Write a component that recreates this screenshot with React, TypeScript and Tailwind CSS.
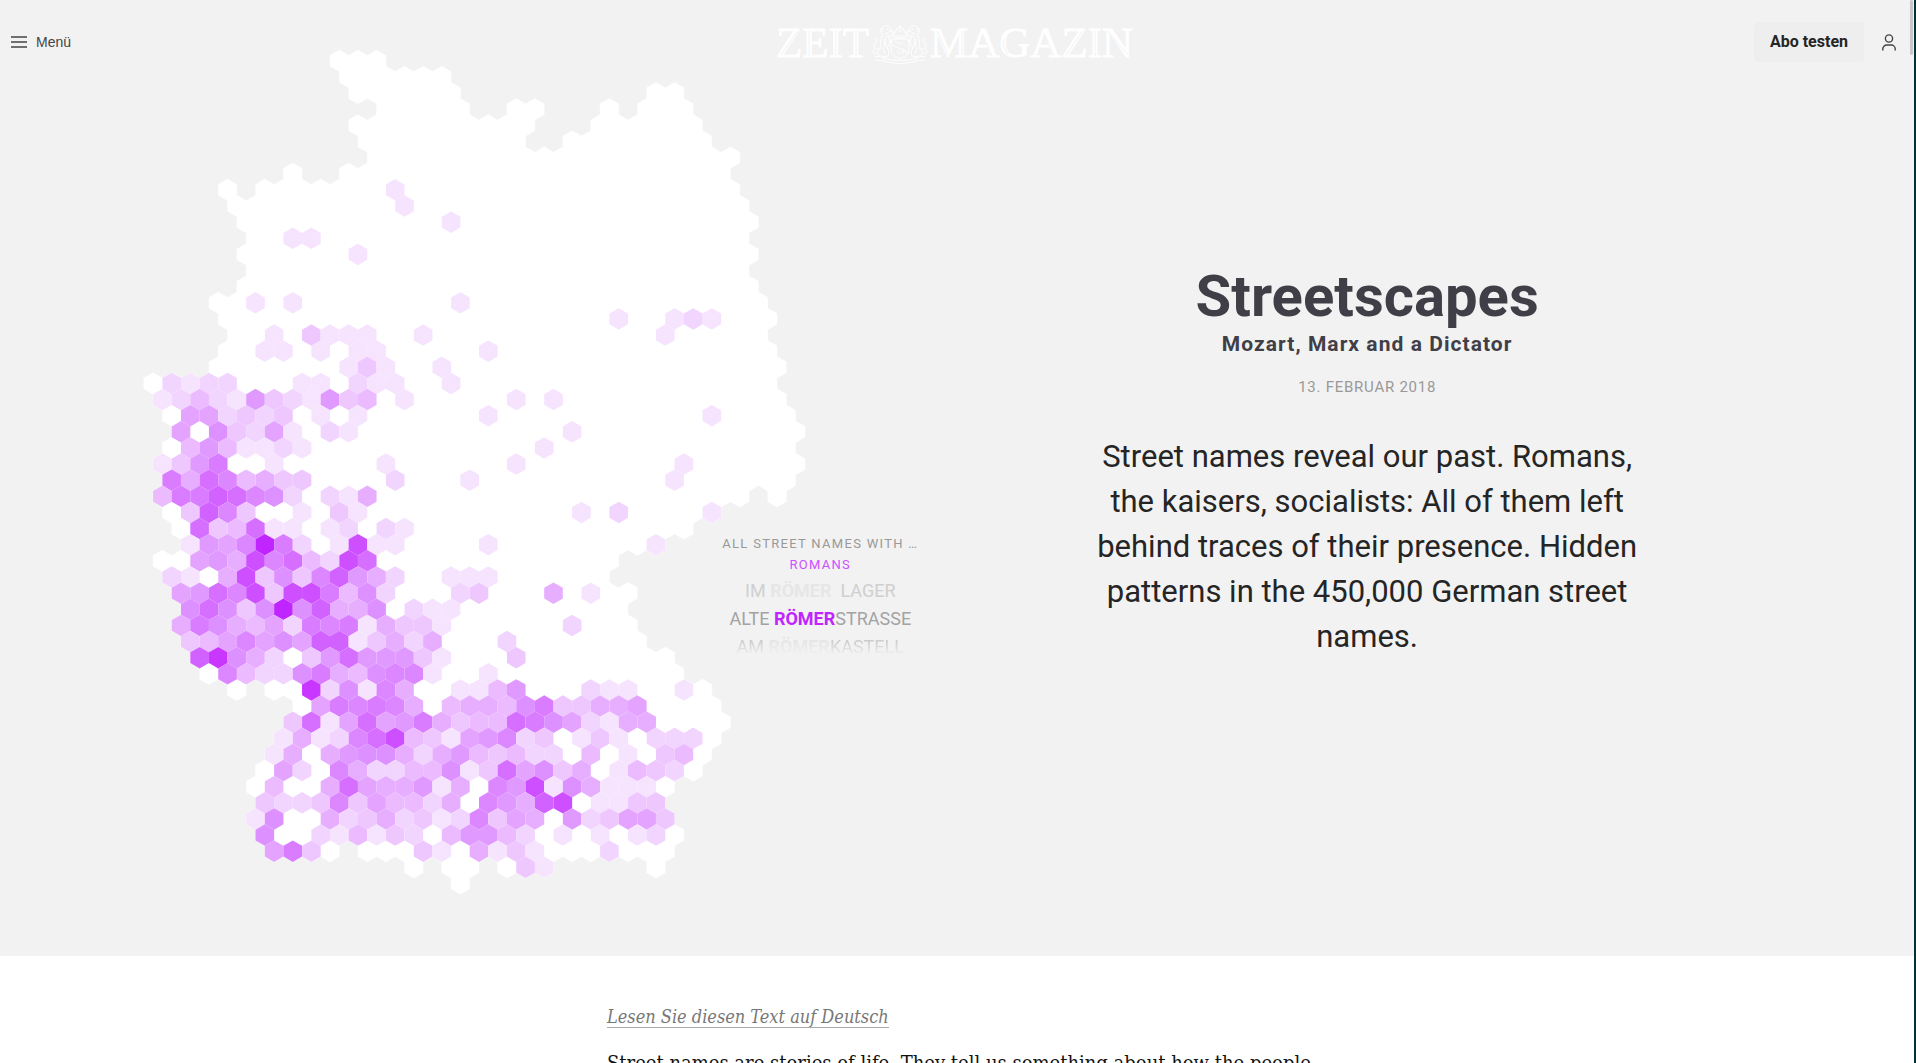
import React from "react";

/* Each row: land columns, then "column:levels" runs with one hex digit per cell. */
const ROWS: [string, string][] = [
  ["10-12", ""],
  ["10-15", ""],
  ["11-16 27-28", ""],
  ["12-16 19-20 24 26-28", ""],
  ["11-20 24-29", ""],
  ["11-19 22-29", ""],
  ["12-31", ""],
  ["7 10-30", ""],
  ["4 6-31", "13:1"],
  ["4-31", "13:1"],
  ["5-32", "16:1"],
  ["5-31", "7:11"],
  ["5-32", "11:1"],
  ["5-31", ""],
  ["5-32", ""],
  ["3-32", "5:1 7:1 16:1"],
  ["4-33", "25:1 28:121"],
  ["4-32", "6:1 8:3111 14:1 27:1"],
  ["4-33", "6:11 9:1 11:11 18:1"],
  ["3-33", "10:131 15:1"],
  ["0-33", "1:2122 8:11 11:211 16:1"],
  ["0-33", "0:124217321734 13:1 19:1 21:1"],
  ["1-34", "2:662323 9:1 11:1 18:1 30:1"],
  ["1-34", "1:6083261 9:21 22:1"],
  ["1-34", "2:4741121 21:1"],
  ["0-34", "0:137a 6:1 12:1 19:1 28:1"],
  ["1-34", "1:a5b94533 13:2 17:1 28:1"],
  ["0-31 33", "0:4aacb982 9:215"],
  ["1-30", "2:3c93 8:1 10:31 23:1 25:2 30:1"],
  ["1-28", "2:b34b11 9:12 12:21"],
  ["2-27", "2:1769fa2 10:1d11 18:1 27:1"],
  ["0-24", "2:675d9b42db"],
  ["1-24", "1:2105d3839c752 16:111"],
  ["1-25", "1:67b9d3dda482 16:23 21:5 23:1"],
  ["2-25", "2:8b838f8c558 14:211"],
  ["1-25", "1:5a85462a9a15331 22:2"],
  ["2-26", "2:3469686cc13525 19:2"],
  ["2-27", "2:ce852037b77731 19:3"],
  ["3-28", "4:94228a548991 18:1"],
  ["4 6-29", "8:e28195 16:1147 23:211 28:1"],
  ["8-30", "9:6a9a95 16:45548a33556"],
  ["7-30", "7:3b16b67a5344ba8621 25:55"],
  ["7-30", "7:15129bd43167923 23:131 27:222"],
  ["6-29", "6:15 9:57885257434 20:22 23:4 25:1 27:34"],
  ["6-29", "7:62 10:95224481 18:3b6835 25:1432"],
  ["5-27", "6:4 9:5b655715 18:97d185111"],
  ["6-27", "6:322393644250975cd 24:1133"],
  ["5-27", "5:18 9:523523129365 22:723663"],
  ["6-28", "6:8 9:214132 16:47742 22:1 24:1 26:12"],
  ["6-9 11-27", "6:6a3 14:31 17:5131 24:2"],
  ["14 16-17 19-21 27", "20:31"],
  ["16", ""],
];

const LEVELS: Record<string, string> = {
  "0": "#ffffff",
  "1": "#f6e4fe",
  "2": "#f1d5ff",
  "3": "#efc7ff",
  "4": "#ebbaff",
  "5": "#e7aeff",
  "6": "#e4a3ff",
  "7": "#e09aff",
  "8": "#dd90ff",
  "9": "#dc86ff",
  a: "#d97cff",
  b: "#d66fff",
  c: "#d262ff",
  d: "#cd4fff",
  e: "#c836ff",
  f: "#c125ff",
};

const W = 18.62;
const R = W / Math.sqrt(3);
const ORIGIN_X = 153;
const ORIGIN_Y = 60.8;

function hexPath(col: number, row: number) {
  const x = ORIGIN_X + W * col + (row % 2 ? W / 2 : 0);
  const y = ORIGIN_Y + R * 1.5 * row;
  const h = W / 2;
  return `M${x} ${y - R}L${x + h} ${y - R / 2}V${y + R / 2}L${x} ${y + R}L${x - h} ${y + R / 2}V${y - R / 2}Z`;
}

const land: string[] = [];
const cells: { d: string; fill: string }[] = [];
ROWS.forEach(([spans, runs], row) => {
  spans.split(" ").forEach((span) => {
    const [a, b] = span.split("-").map(Number);
    for (let c = a; c <= (b ?? a); c++) land.push(hexPath(c, row));
  });
  runs
    .split(" ")
    .filter(Boolean)
    .forEach((run) => {
      const [start, levels] = run.split(":");
      [...levels].forEach((level, i) => {
        if (level !== "0") cells.push({ d: hexPath(Number(start) + i, row), fill: LEVELS[level] });
      });
    });
});

function StreetMap() {
  return (
    <svg viewBox="0 0 820 956" className="block h-auto w-full" role="img" aria-label="Map of Germany">
      <path d={land.join("")} fill="#fff" stroke="#fff" strokeWidth="0.4" />
      {cells.map((cell) => (
        <path key={cell.d} d={cell.d} fill={cell.fill} />
      ))}
    </svg>
  );
}

function Lion() {
  return (
    <g>
      <path d="M109 13c-2-2-1-5 2-6 3-1 5 1 5 3s-1 3-2 4l-3 1M112 10h2M108 9c-2 1-2 4 0 6M114 15c0 3 2 5 2 8 0 2-2 4-3 6 2 2 2 5 1 8l-5 1M109 15c-2 4-3 7-2 11-1 4-4 5-3 9l2 2M115 18l4-2 1-2M115 22l4 0M112 17l-1 6 1 5M110 20l1 8M109 29l2 6" />
      <path d="M107 29c-3 2-7 1-7-2s4-3 3-6c0-2-3-3-3-1M101 30c-2 1-3 4-1 5 1 1 3 0 3-1" />
    </g>
  );
}

function Logo() {
  return (
    <a href="#magazin" aria-label="ZEIT Magazin" className="block">
      <svg viewBox="0 0 360 46" className="block h-[46px] w-[360px]" fill="#fff">
        <g fontFamily="'Liberation Serif', serif" fontSize="43" stroke="#fff" strokeWidth="0.8">
          <text x="2" y="38">ZEIT</text>
          <text x="156" y="38">MAGAZIN</text>
        </g>
        <path
          d="M23.500 12L7 36M35 11v26M61.800 11v26M82 11v26M163 12l11 24M188 12v24M209 16l9 21M230 20q-2 9 4 15M271 16l9 21M308.500 12L292 36M321 11v26M334 12l20 24"
          fill="none"
          stroke="#f2f2f2"
          strokeWidth="1"
        />
        <g fill="none" stroke="#fff" strokeWidth="0.900">
          <Lion />
          <g transform="matrix(-1 0 0 1 252 0)">
            <Lion />
          </g>
          <path d="M117 20h18v12c0 4-5 6-9 8-4-2-9-4-9-8zM117 25l18 10M121 22l5 3 3-2M123 31l3 4 4-2M128 29l4 3" />
          <path d="M119 17l-2-6 4 3 2-5 3 4 3-4 2 5 4-3-2 6zM120 19h12M126 6v4M124 8h4" />
          <path d="M100 38c5-2 10 1 13 2 5 2 21 2 26 0 3-1 8-4 13-2M102 41c5 0 8 1 12 2 7 2 17 2 24 0 4-1 7-2 12-2M107 36l4 5M145 36l-4 5" />
        </g>
      </svg>
    </a>
  );
}

function Header() {
  return (
    <header className="absolute inset-x-0 top-0 z-10 grid h-[84px] grid-cols-[1fr_auto_1fr] items-center pr-[18px] pl-[11px]">
      <button type="button" className="flex items-center gap-[9px] justify-self-start text-sm text-[#444]">
        <svg viewBox="0 0 16 12" className="h-3 w-4" fill="#6f6f6f">
          <path d="M0 0h16v2H0zM0 5h16v2H0zM0 10h16v2H0z" />
        </svg>
        <span>Menü</span>
      </button>
      <Logo />
      <div className="flex items-center gap-[18px] justify-self-end">
        <button type="button" className="h-10 rounded bg-[#eeeeee] px-4 font-[Roboto] text-base font-bold text-[#252525]">
          Abo testen
        </button>
        <button type="button" aria-label="Account">
          <svg viewBox="0 0 14 17" className="h-[17px] w-3.5" fill="none" stroke="#444" strokeWidth="1.400">
            <circle cx="7" cy="4.500" r="3.600" />
            <path d="M.8 16.500V15a4 4 0 0 1 4-4h4.400a4 4 0 0 1 4 4v1.500" />
          </svg>
        </button>
      </div>
    </header>
  );
}

function NameTicker() {
  return (
    <div className="absolute top-[533px] right-0 w-[240px] translate-x-1/2 text-center font-[Roboto] uppercase">
      <p className="text-[13px] leading-[21px] tracking-widest text-[#999]">All street names with …</p>
      <p className="text-[13px] leading-[21px] tracking-widest text-[#cd4fff]">Romans</p>
      <ul className="mt-0.5 text-lg leading-7 text-[#a3a3a3]">
        <li className="text-[#cfcfcf]">
          Im <b className="text-[#e6e6e6]">Römer</b>&nbsp; Lager
        </li>
        <li>
          Alte <b className="text-[#c125ff]">Römer</b>strasse
        </li>
        <li className="mask-linear-[180deg] mask-linear-from-30% mask-linear-to-80% text-[#cdcdcd]">
          Am <b className="text-[#e6e6e6]">Römer</b>kastell
        </li>
      </ul>
    </div>
  );
}

export default function App() {
  return (
    <div className="relative h-screen overflow-hidden border-r-2 border-[#03303b] bg-white font-['Liberation_Sans',sans-serif]">
      <Header />
      <section className="grid grid-cols-[3fr_4fr] bg-[#f2f2f2]">
        <div className="relative">
          <StreetMap />
          <NameTicker />
        </div>
        <div className="flex flex-col items-center pt-[260px] text-center font-[Roboto] text-[#403f48]">
          <h1 className="text-[58px] leading-[72px] font-bold">Streetscapes</h1>
          <h2 className="text-[21px] leading-6 font-bold tracking-wider">Mozart, Marx and a Dictator</h2>
          <p className="mt-5 text-[15px] leading-[22px] tracking-wider text-[#999] uppercase">13. Februar 2018</p>
          <p className="mt-9 max-w-[560px] text-[31px] leading-[45px] text-[#252525]">
            Street names reveal our past. Romans, the kaisers, socialists: All of them left behind traces of their
            presence. Hidden patterns in the 450,000 German street names.
          </p>
        </div>
      </section>
      <article className="mx-auto w-[700px] pt-[46px] font-['DejaVu_Serif_Condensed','DejaVu_Serif',serif] text-lg leading-[30px] text-[#111]">
        <p>
          <a href="#deutsch" className="border-b border-[#aaa] text-[#777] italic">
            Lesen Sie diesen Text auf Deutsch
          </a>
        </p>
        <p className="mt-4 text-xl leading-[30px] whitespace-nowrap">
          Street names are stories of life. They tell us something about how the people
        </p>
      </article>
      <div className="absolute top-0 right-px h-[55px] w-[3px] rounded-sm bg-[#c8c8c8]" />
    </div>
  );
}
